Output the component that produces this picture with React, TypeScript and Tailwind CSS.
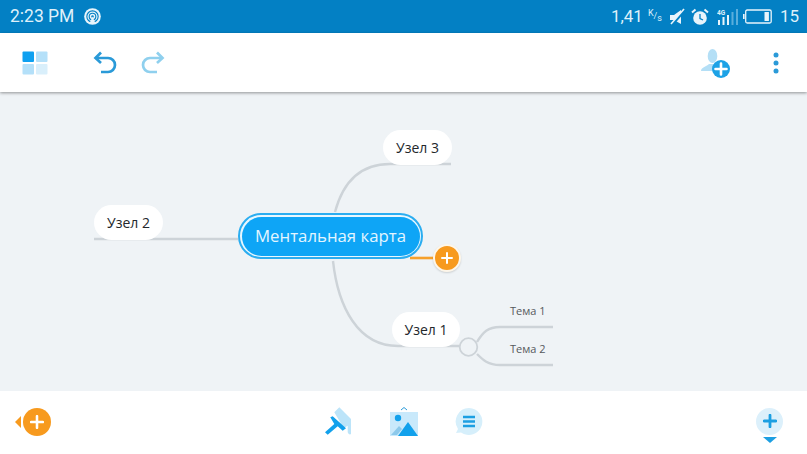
import React from "react";

const Plus = ({ c = "#fff", size = 12, w = 2.4 }: { c?: string; size?: number; w?: number }) => (
  <svg width={size} height={size} viewBox="0 0 12 12">
    <path d="M6 1v10M1 6h10" stroke={c} strokeWidth={w} strokeLinecap="round" />
  </svg>
);

function Node({ label, className }: { label: string; className: string }) {
  return (
    <div className={"absolute flex h-[35px] items-center justify-center rounded-[18px] bg-white text-[14px] text-[#23272b] " + className}>
      {label}
    </div>
  );
}

function StatusBar() {
  return (
    <div className="flex h-[33px] items-center justify-between bg-[#0380c4] pl-[10px] pr-[8px] font-['Roboto',sans-serif] text-[#dff0fa]">
      <div className="flex items-center gap-[10px]">
        <span className="text-[17.5px]">2:23 PM</span>
        <svg width="17" height="17" viewBox="0 0 18 18" fill="none">
          <circle cx="9" cy="9" r="8.8" fill="#e8f4fb" />
          <circle cx="9" cy="9" r="6" stroke="#0380c4" strokeWidth="1.2" />
          <circle cx="9" cy="9" r="3.5" stroke="#0380c4" strokeWidth="1.2" />
          <circle cx="9" cy="9" r="1.3" fill="#0380c4" />
          <path d="M6 16l3-7 3 7z" fill="#e8f4fb" />
        </svg>
      </div>
      <div className="flex items-center">
        <span className="text-[17px]">1,41</span>
        <span className="ml-[5px] flex w-[13px] items-center text-[9px] leading-none">
          <span className="-translate-y-[3px]">K</span>
          <span>/</span>
          <span className="translate-y-[2px]">s</span>
        </span>
        <svg className="ml-[8px]" width="18" height="18" viewBox="0 0 18 18">
          <path d="M1 7h4l7-5v14l-7-4H1z" fill="#e8f4fb" />
          <path d="M3 17L17 1" stroke="#0380c4" strokeWidth="2.6" />
          <path d="M2 16L15 1" stroke="#e8f4fb" strokeWidth="1.6" />
        </svg>
        <svg className="ml-[4px]" width="18" height="18" viewBox="0 0 18 18">
          <circle cx="9" cy="10" r="6.8" fill="#e8f4fb" />
          <path d="M9 6v4.5l3 1.5" stroke="#0380c4" strokeWidth="1.3" fill="none" />
          <path d="M1 4.5L4.5 1.5M17 4.5L13.5 1.5" stroke="#e8f4fb" strokeWidth="2" />
        </svg>
        <svg className="ml-[8px]" width="23" height="18" viewBox="0 0 23 18">
          <text x="0" y="6.5" fontSize="6.5" fontWeight="700" fill="#dff0fa" fontFamily="Roboto">4G</text>
          <rect x="1" y="12" width="2" height="5" fill="#e8f4fb" />
          <rect x="5.5" y="9" width="2" height="8" fill="#e8f4fb" />
          <rect x="10" y="7" width="2" height="10" fill="#e8f4fb" />
          <rect x="14.5" y="4" width="2" height="13" fill="#5aaedc" />
          <rect x="19" y="1" width="2" height="16" fill="#5aaedc" />
        </svg>
        <svg className="ml-[3px]" width="29" height="15" viewBox="0 0 29 15">
          <rect x="2.7" y="1" width="25.5" height="13" rx="1.5" fill="none" stroke="#e8f4fb" strokeWidth="1.3" />
          <rect x="0" y="5" width="1.6" height="5" fill="#e8f4fb" />
          <rect x="21.5" y="3" width="4.4" height="9" fill="#e8f4fb" />
        </svg>
        <span className="ml-[8px] text-[17px]">15</span>
      </div>
    </div>
  );
}

function Toolbar() {
  return (
    <div className="relative z-10 flex h-[59px] items-center justify-between bg-white pl-[22px] pr-[28px] shadow-[0_1px_3px_rgba(0,0,0,0.4)]">
      <div className="flex items-center">
        <svg width="26" height="24" viewBox="0 0 26 24">
          <rect x="0.5" y="0.5" width="11.5" height="10.5" rx="1" fill="#0ea0f0" />
          <rect x="14" y="0.5" width="11.5" height="10.5" rx="1" fill="#b4e0f9" />
          <rect x="0.5" y="13" width="11.5" height="10.5" rx="1" fill="#b4e0f9" />
          <rect x="14" y="13" width="11.5" height="10.5" rx="1" fill="#d9effb" />
        </svg>
        <svg className="ml-[45px]" width="24" height="24" viewBox="0 0 24 24" fill="none" stroke="#2a9ad8" strokeWidth="2.7">
          <path d="M2.5 7H15a6.5 6.5 0 0 1 0 14H8" />
          <path d="M8 1.5L2.5 7l5.500 5" />
        </svg>
        <svg className="ml-[24px]" width="24" height="24" viewBox="0 0 24 24" fill="none" stroke="#8fd0ee" strokeWidth="2.7">
          <path d="M21.5 7H9a6.5 6.5 0 0 0 0 14h7" />
          <path d="M16 1.5L21.5 7 16 12" />
        </svg>
      </div>
      <div className="flex items-center">
        <svg width="30" height="30" viewBox="0 0 30 30">
          <ellipse cx="11.5" cy="8" rx="4.8" ry="7" fill="#b4dff6" />
          <path d="M0 23c0-3.5 5-4.5 8-7h8v7z" fill="#b4dff6" />
          <circle cx="20" cy="21" r="9" fill="#1da2e6" />
          <path d="M20 15.5v11M14.5 21h11" stroke="#fff" strokeWidth="2.6" strokeLinecap="round" />
        </svg>
        <svg className="ml-[42px]" width="6" height="22" viewBox="0 0 6 22">
          <circle cx="3" cy="3" r="2.5" fill="#2a9ad8" />
          <circle cx="3" cy="11" r="2.5" fill="#2a9ad8" />
          <circle cx="3" cy="19" r="2.5" fill="#2a9ad8" />
        </svg>
      </div>
    </div>
  );
}

function Canvas() {
  return (
    <div className="relative h-[299px] bg-[#eff3f6] font-['Open_Sans',sans-serif]">
      <svg className="absolute inset-0" width="807" height="299" viewBox="0 0 807 299" fill="none" stroke="#cdd3d8" strokeWidth="2.4">
        <path d="M335 120C343 90 360 72 390 72H451" />
        <path d="M94 147H238" />
        <path d="M333 169C338 215 358 254 398 254H461" />
        <path d="M477 250C483 240 488 235 500 235H553" />
        <path d="M477 262C483 268 488 273 500 273H553" />
        <circle cx="468.5" cy="255" r="8.8" fill="#eff3f6" strokeWidth="1.8" />
        <path d="M410 166H434" stroke="#f6a02b" strokeWidth="2.6" />
      </svg>
      <Node label="Узел 3" className="left-[383px] top-[38px] w-[69px]" />
      <Node label="Узел 2" className="left-[94px] top-[113px] w-[69px]" />
      <Node label="Узел 1" className="left-[392px] top-[220px] w-[68px]" />
      <span className="absolute left-[510px] top-[211px] text-[11px] text-[#55595d]">Тема 1</span>
      <span className="absolute left-[510px] top-[249px] text-[11px] text-[#55595d]">Тема 2</span>
      <div className="absolute left-[238px] top-[121px] flex h-[46px] w-[185px] items-center justify-center rounded-[23px] border-2 border-[#2badf0] bg-[#e8f7ff] p-[1.5px]">
        <div className="flex h-full w-full items-center justify-center rounded-[20px] bg-[#0ea5f6] text-[16.8px] text-[#e3f5ff]">
          Ментальная карта
        </div>
      </div>
      <div className="absolute left-[433px] top-[152px] flex h-[28px] w-[28px] items-center justify-center rounded-full border-2 border-[#fdf6ea] bg-[#f79a1e] shadow-[0_1px_2px_rgba(0,0,0,0.15)]">
        <Plus size={12} w={2} />
      </div>
    </div>
  );
}

function BottomBar() {
  return (
    <div className="flex h-[63px] items-center justify-between bg-white pb-[1px] pl-[15px] pr-[24px]">
      <div className="flex items-center">
        <div className="h-0 w-0 border-y-[6px] border-r-[6px] border-y-transparent border-r-[#f79a1e]" />
        <div className="ml-[2px] flex h-[28px] w-[28px] items-center justify-center rounded-full bg-[#f79a1e]">
          <Plus size={14} w={2.2} />
        </div>
      </div>
      <div className="flex items-center">
        <svg width="30" height="30" viewBox="0 0 30 30">
          <path d="M10.3 5.3L15.3 .3L27 12V27C26 28 24 27 23.7 25.3V18.7L19.7 21.3z" fill="#bce4f9" />
          <path d="M6.3 10.3L8.7 9.3L22 21.3L18.7 23.7L13.7 19.3L3.7 27.7L1 25.3L10.3 17z" fill="#12a1ec" />
        </svg>
        <svg className="ml-[36px]" width="29" height="30" viewBox="0 0 29 30">
          <path d="M11 3l3-2.5 3 2.5" stroke="#2a9ad8" strokeWidth="1" fill="none" />
          <rect x="0" y="5" width="28" height="24" fill="#c9e9fb" />
          <circle cx="8" cy="11" r="3.2" fill="#12a1ec" />
          <path d="M1 28l8-9 3 3-5 6z" fill="#8cc9eb" />
          <path d="M8 29l10-14 10 14z" fill="#12a1ec" />
        </svg>
        <svg className="ml-[36px]" width="28" height="28" viewBox="0 0 28 28">
          <path d="M14 0a13.5 13.5 0 1 1-8 24.5L1 25l2-4A13.5 13.5 0 0 1 14 0z" fill="#d6effb" />
          <path d="M8 9h12M8 13.5h12M8 18h12" stroke="#1c9fe2" strokeWidth="2.4" />
        </svg>
      </div>
      <div className="flex flex-col items-center pt-[6px]">
        <div className="flex h-[27px] w-[27px] items-center justify-center rounded-full bg-[#dcf0fb]">
          <Plus c="#1c9fe2" size={14} w={2.4} />
        </div>
        <div className="mt-[2px] h-0 w-0 border-x-[7px] border-t-[6px] border-x-transparent border-t-[#1c9fe2]" />
      </div>
    </div>
  );
}

export default function App() {
  return (
    <div className="flex h-[454px] w-[807px] flex-col overflow-hidden">
      <StatusBar />
      <Toolbar />
      <Canvas />
      <BottomBar />
    </div>
  );
}
